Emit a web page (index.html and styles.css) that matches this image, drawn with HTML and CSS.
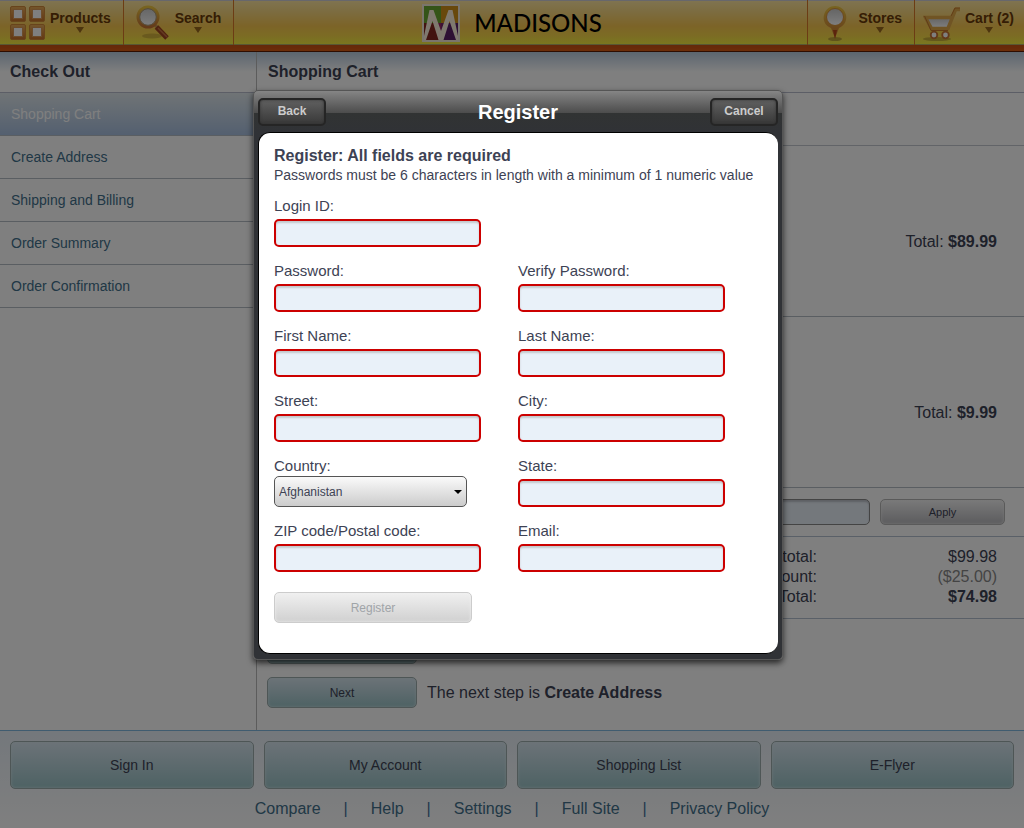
FILE: index.html
```html
<!DOCTYPE html>
<html lang="en">
<head>
<meta charset="utf-8">
<title>Madisons - Check Out</title>
<link rel="stylesheet" href="styles.css">
</head>
<body>
<header class="topbar">
  <nav class="topnav">
    <a class="topnav-item products" href="#">
      <svg width="36" height="38" viewBox="0 0 36 38">
        <defs>
          <linearGradient id="tile" x1="0" y1="0" x2="0" y2="1"><stop offset="0" stop-color="#e8ac58"/><stop offset="1" stop-color="#c87028"/></linearGradient>
        </defs>
        <g fill="url(#tile)" stroke="#d08838" stroke-width="1">
          <rect x="0.5" y="2.500" width="15" height="15" rx="1.500"/><rect x="19.500" y="2.500" width="15" height="15" rx="1.500"/>
          <rect x="0.5" y="20.500" width="15" height="15" rx="1.500"/><rect x="19.500" y="20.500" width="15" height="15" rx="1.500"/>
        </g>
        <g fill="#fff" stroke="#d89858" stroke-width="1">
          <rect x="3.500" y="5.500" width="9" height="9"/><rect x="22.500" y="5.500" width="9" height="9"/>
          <rect x="3.500" y="23.500" width="9" height="9"/><rect x="22.500" y="23.500" width="9" height="9"/>
        </g>
      </svg>
      <span class="topnav-label">Products<span class="caret"></span></span>
    </a>
    <a class="topnav-item search" href="#">
      <svg width="34" height="38" viewBox="0 0 34 38">
        <defs>
          <linearGradient id="gold" x1="0" y1="0" x2="0" y2="1"><stop offset="0" stop-color="#f0c840"/><stop offset="1" stop-color="#c87434"/></linearGradient>
          <linearGradient id="glass" x1="0" y1="0" x2="0" y2="1"><stop offset="0" stop-color="#c8c8c8"/><stop offset="1" stop-color="#fff"/></linearGradient>
        </defs>
        <ellipse cx="16" cy="32" rx="10" ry="2.500" fill="#b09030" opacity=".5"/>
        <path d="M18 20 L23 25" stroke="#c49858" stroke-width="3"/>
        <path d="M20.500 23 L31 34" stroke="#a04420" stroke-width="5"/>
        <path d="M22 24 L31 33" stroke="#c87444" stroke-width="1.500"/>
        <circle cx="12" cy="13" r="10" fill="url(#glass)" stroke="url(#gold)" stroke-width="3"/>
        <circle cx="12" cy="13" r="8.300" fill="none" stroke="#a89068" stroke-width="1"/>
      </svg>
      <span class="topnav-label">Search<span class="caret"></span></span>
    </a>
  </nav>
  <a class="logo" href="#">
    <svg width="38" height="38" viewBox="0 0 38 38">
      <rect width="38" height="38" fill="#f4ead8"/>
      <rect x="2" y="2" width="17" height="17" fill="#68a830"/><rect x="19" y="2" width="17" height="17" fill="#d09018"/>
      <rect x="2" y="19" width="17" height="17" fill="#842820"/><rect x="19" y="19" width="17" height="17" fill="#5c2068"/>
      <path d="M14 19 H19 V31 Z" fill="#9c2464"/><path d="M19 19 H24 L19 31 Z" fill="#782468"/>
      <path d="M2 32 L7.500 6 H11.500 L19 27 L26.500 6 H30.500 L36 32 V36 H34 L27.500 17 L21.500 36 H16.500 L10.500 17 L4 36 H2 Z" fill="#fff2df"/>
    </svg>
    <span class="logo-name">MADISONS</span>
  </a>
  <nav class="topnav topnav-end">
    <a class="topnav-item stores" href="#">
      <svg width="26" height="38" viewBox="0 0 26 38">
        <ellipse cx="13" cy="35" rx="7" ry="2" fill="#a88c30" opacity=".7"/>
        <path d="M13 34 L9 24 C2 21 1 15 2 11 C5 -1 21 -1 24 11 C25 16 23 21 17 24 Z" fill="url(#gold)"/>
        <path d="M11 26 L13 35 L15 26 Z" fill="#b84818"/>
        <circle cx="13" cy="13" r="8.500" fill="url(#glass)" stroke="#d89038"/>
      </svg>
      <span class="topnav-label">Stores<span class="caret"></span></span>
    </a>
    <a class="topnav-item cart" href="#">
      <svg width="38" height="38" viewBox="0 0 38 38">
        <ellipse cx="14" cy="35" rx="14" ry="2" fill="#a88c30" opacity=".6"/>
        <path d="M3 13.500 H28.500 L23.500 24 H9 Z" fill="url(#glass)"/>
        <path d="M37 5.500 H32.500 L25 24.500 H8.500 L2.500 13.500 H28" fill="none" stroke="#e0a848" stroke-width="3.500"/>
        <path d="M37 4 H32 L28 12 M8 26.500 L1.500 12 M8 26.500 H25" fill="none" stroke="#c4782c" stroke-width="1"/>
        <circle cx="11" cy="31" r="3.300" fill="#fff" stroke="#c87434" stroke-width="1.800"/>
        <circle cx="22.500" cy="31" r="3.300" fill="#fff" stroke="#c87434" stroke-width="1.800"/>
      </svg>
      <span class="topnav-label">Cart (2)<span class="caret"></span></span>
    </a>
  </nav>
</header>

<main class="page">
  <aside class="steps">
    <h2 class="heading">Check Out</h2>
    <ul class="step-list">
      <li class="step current"><a href="#">Shopping Cart</a></li>
      <li class="step"><a href="#">Create Address</a></li>
      <li class="step"><a href="#">Shipping and Billing</a></li>
      <li class="step"><a href="#">Order Summary</a></li>
      <li class="step"><a href="#">Order Confirmation</a></li>
    </ul>
  </aside>
  <section class="basket">
    <h2 class="heading">Shopping Cart</h2>
    <div class="basket-intro"></div>
    <div class="basket-line">Total:&nbsp;<b>$89.99</b></div>
    <div class="basket-line">Total:&nbsp;<b>$9.99</b></div>
    <form class="coupon">
      <input class="coupon-code" type="text" aria-label="Promotion code">
      <button class="btn btn-grey btn-apply" type="button">Apply</button>
    </form>
    <table class="totals">
      <tr><th scope="row">Subtotal:</th><td>$99.98</td></tr>
      <tr class="discount"><th scope="row">Discount:</th><td>($25.00)</td></tr>
      <tr class="grand"><th scope="row">Total:</th><td>$74.98</td></tr>
    </table>
    <div class="actions">
      <button class="btn btn-blue btn-step" type="button" aria-label="Update"></button>
      <div class="next">
        <button class="btn btn-blue btn-step" type="button">Next</button>
        <span>The next step is <b>Create Address</b></span>
      </div>
    </div>
  </section>
</main>

<footer class="footer">
  <div class="footer-buttons">
    <button class="btn btn-blue btn-tall" type="button">Sign In</button>
    <button class="btn btn-blue btn-tall" type="button">My Account</button>
    <button class="btn btn-blue btn-tall" type="button">Shopping List</button>
    <button class="btn btn-blue btn-tall" type="button">E-Flyer</button>
  </div>
  <nav class="footer-links">
    <a href="#">Compare</a><span>|</span><a href="#">Help</a><span>|</span><a href="#">Settings</a><span>|</span><a href="#">Full Site</a><span>|</span><a href="#">Privacy Policy</a>
  </nav>
</footer>

<div class="overlay">
  <div class="dialog" role="dialog" aria-labelledby="dialog-title">
    <div class="dialog-bar">
      <button class="btn-dark" type="button">Back</button>
      <h1 class="dialog-title" id="dialog-title">Register</h1>
      <button class="btn-dark" type="button">Cancel</button>
    </div>
    <form class="panel">
      <h2 class="panel-title">Register: All fields are required</h2>
      <p class="panel-hint">Passwords must be 6 characters in length with a minimum of 1 numeric value</p>
      <div class="fields">
        <div class="field wide"><label for="login">Login ID:</label><input id="login" type="text"></div>
        <div class="field"><label for="pass">Password:</label><input id="pass" type="password"></div>
        <div class="field"><label for="pass2">Verify Password:</label><input id="pass2" type="password"></div>
        <div class="field"><label for="first">First Name:</label><input id="first" type="text"></div>
        <div class="field"><label for="last">Last Name:</label><input id="last" type="text"></div>
        <div class="field"><label for="street">Street:</label><input id="street" type="text"></div>
        <div class="field"><label for="city">City:</label><input id="city" type="text"></div>
        <div class="field"><label for="country">Country:</label><span class="select"><select id="country"><option>Afghanistan</option></select></span></div>
        <div class="field"><label for="state">State:</label><input id="state" type="text"></div>
        <div class="field"><label for="zip">ZIP code/Postal code:</label><input id="zip" type="text"></div>
        <div class="field"><label for="email">Email:</label><input id="email" type="email"></div>
      </div>
      <button class="btn btn-grey btn-register" type="submit" disabled>Register</button>
    </form>
  </div>
</div>
</body>
</html>
```
FILE: styles.css
```css
* { box-sizing: border-box; }

body {
  margin: 0;
  min-height: 100vh;
  display: flex;
  flex-direction: column;
  font-family: "Liberation Sans", Arial, sans-serif;
  font-size: 16px;
  line-height: 20px;
  color: #3d4254;
  background: #fff;
}

a { color: #42708c; text-decoration: none; }
h1, h2, p, ul { margin: 0; padding: 0; }
button, input, select { font-family: inherit; color: inherit; margin: 0; }

/* Top bar */
.topbar {
  display: grid;
  grid-template-columns: 1fr auto 1fr;
  height: 52px;
  border-bottom: 1px solid #5c1c04;
  background:
    linear-gradient(#cfcfd8, #cfcfd8) 0 0 / 100% 1px no-repeat,
    linear-gradient(#c85414, #d85c14) 0 45px / 100% 6px no-repeat,
    linear-gradient(#b0b068, #b0b068) 0 44px / 100% 1px no-repeat,
    linear-gradient(#ffe8a4 0, #f8d880 12px, #f8c850 26px, #f8d848 36px, #f4f040 44px);
}
.topnav { display: flex; height: 45px; }
.topnav-end { justify-content: flex-end; }
.topnav-item {
  display: flex;
  align-items: center;
  font-size: 14px;
  font-weight: bold;
  color: #6a3a08;
  border-right: 1px solid #d87828;
}
.topnav-end .topnav-item { border-right: 0; border-left: 1px solid #d87828; }
.products { padding: 0 12px 0 10px; gap: 4px; }
.search { padding: 0 12px; gap: 5px; }
.stores { padding: 0 12px 0 14px; gap: 10px; }
.cart { padding: 0 10px 0 8px; gap: 4px; }
.topnav-label {
  display: flex;
  flex-direction: column;
  align-items: center;
  line-height: 18px;
  padding-bottom: 4px;
}
.caret {
  border: 4px solid transparent;
  border-top: 6px solid #98681c;
  border-bottom: 0;
}
.logo { display: flex; align-items: center; gap: 14px; height: 45px; }
.logo-name { font-family: Lato, sans-serif; font-size: 24px; color: #000; font-weight: 500; }

/* Page columns */
.page {
  flex: 1;
  display: grid;
  grid-template-columns: 1fr 3fr;
  background: linear-gradient(#b8cce0, #fff 20px);
}
.steps { border-right: 1px solid #b8b8b8; margin-right: -1px; }
.heading {
  height: 41px;
  padding: 10px;
  font-size: 16px;
  border-bottom: 1px solid #b8bccc;
}
.step-list { list-style: none; }
.step { border-bottom: 1px solid #b4bcc4; }
.step a { display: block; padding: 11px; font-size: 14px; }
.step.current { background: linear-gradient(#e0e8ec, #a8c0e0); }
.step.current a { color: #fff; }

.basket { display: flex; flex-direction: column; padding-left: 1px; }
.basket .heading { padding-left: 11px; }
.basket-intro { height: 53px; border-bottom: 1px solid #c4c8d0; }
.basket-line {
  display: flex;
  align-items: center;
  justify-content: flex-end;
  height: 171px;
  padding: 22px 27px 0 10px;
  border-bottom: 1px solid #b4bcc4;
}
.coupon {
  display: flex;
  align-items: center;
  justify-content: flex-end;
  gap: 10px;
  height: 49px;
  padding: 0 19px;
  border-bottom: 1px solid #b4c0d0;
}
.coupon-code {
  width: 220px;
  height: 26px;
  border: 1px solid #888;
  border-radius: 5px;
  background: #e8f0f8;
  box-shadow: inset 0 2px 2px #bcc0c8;
}
.totals { width: 100%; padding: 10px 27px 11px 10px; border-spacing: 0; border-bottom: 1px solid #b4c0d0; }
.totals th, .totals td { padding: 0; text-align: right; font-weight: normal; }
.totals td { width: 180px; }
.totals .discount td { color: #888; }
.totals .grand td { font-weight: bold; }
.actions { display: flex; flex-direction: column; gap: 13px; padding: 14px 10px 22px; }
.next { display: flex; align-items: center; gap: 10px; }

/* Buttons */
.btn {
  padding: 0;
  border: 1px solid #9cacac;
  border-radius: 5px;
  font-size: 12px;
}
.btn-blue {
  background: linear-gradient(#d8e6f0, #9cc4c8);
  box-shadow: inset 0 0 3px #d8e8ec;
}
.btn-grey {
  border-color: #b4b4b4;
  background: linear-gradient(#f4f4f4, #b8b8bc);
  box-shadow: inset 0 0 3px #f0f0f0;
}
.btn-step { width: 150px; height: 31px; }
.btn-apply { width: 125px; height: 26px; font-size: 11px; }
.btn-tall { flex: 1; height: 48px; font-size: 14px; }

/* Footer */
.footer {
  padding: 10px 10px 9px;
  border-top: 1px solid #80b8e0;
  background: linear-gradient(#e8f0f8, #fff);
}
.footer-buttons { display: flex; gap: 10px; }
.footer-links { display: flex; justify-content: center; gap: 23px; margin-top: 10px; color: #42709c; }

/* Registration dialog */
.overlay {
  position: absolute;
  inset: 0;
  display: flex;
  justify-content: center;
  align-items: flex-start;
  padding: 90px 0 0 12px;
  background: rgba(0, 0, 0, 0.5);
}
.dialog {
  width: 530px;
  padding: 0 4px 5px;
  border: 1px solid #555;
  border-radius: 5px;
  background: linear-gradient(#858585 0, #4c4c4c 22px, #313333 22px, #303236 42px);
  box-shadow: 0 3px 6px rgba(0, 0, 0, 0.7);
}
.dialog-bar { display: flex; align-items: center; justify-content: space-between; height: 41px; }
.dialog-title { font-size: 20px; color: #fff; }
.btn-dark {
  width: 68px;
  height: 28px;
  padding: 0 0 2px;
  border: 2px solid #252525;
  border-radius: 5px;
  background: linear-gradient(#606060, #383838);
  box-shadow: inset 0 0 3px #333;
  font-size: 12px;
  font-weight: bold;
  color: #ccc;
}
.panel {
  padding: 13px 15px 30px;
  border: 1px solid #000;
  border-right: 0;
  border-radius: 12px;
  background: #fff;
}
.panel-title { font-size: 16px; }
.panel-hint { font-size: 14px; line-height: 18px; }
.fields { display: grid; grid-template-columns: 244px 1fr; grid-auto-rows: 65px; margin-top: 12px; }
.field { display: flex; flex-direction: column; align-items: flex-start; font-size: 15px; }
.field.wide { grid-column: 1 / -1; }
.field input {
  width: 207px;
  height: 28px;
  margin-top: 3px;
  padding: 0 5px;
  border: 2px solid #c00;
  border-radius: 5px;
  background: #e9f1f9;
  box-shadow: inset 0 2px 2px #c4c8cc;
}
.select { position: relative; width: 193px; }
.select select {
  display: block;
  width: 100%;
  height: 31px;
  padding: 0 4px;
  appearance: none;
  border: 1px solid #555;
  border-radius: 5px;
  background: linear-gradient(#fafafa, #ccc);
  font-size: 12px;
}
.select::after {
  content: "";
  position: absolute;
  right: 5px;
  top: 14px;
  border: 4px solid transparent;
  border-top-color: #000;
  border-bottom: 0;
}
.btn-register {
  display: block;
  width: 198px;
  height: 31px;
  margin-top: 6px;
  color: #a0a4a8;
  border-color: #ccc;
  background: linear-gradient(#f0f0f0, #d0d0d0);
}
```
